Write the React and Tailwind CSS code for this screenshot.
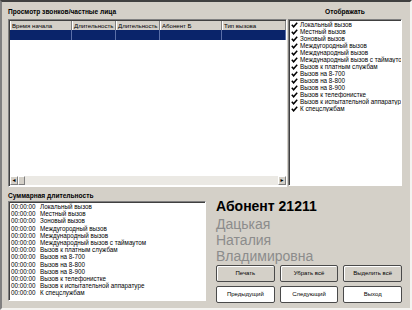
import React from "react";

const font = { fontFamily: '"Liberation Sans", Arial, sans-serif' };

const callTypes = [
  "Локальный вызов",
  "Местный вызов",
  "Зоновый вызов",
  "Междугородный вызов",
  "Международный вызов",
  "Международный вызов с таймаутом",
  "Вызов к платным службам",
  "Вызов на 8-700",
  "Вызов на 8-800",
  "Вызов на 8-900",
  "Вызов к телефонистке",
  "Вызов к испытательной аппаратуре",
  "К спецслужбам",
];

const columns = [
  { title: "Время начала", w: "w-[62px]" },
  { title: "Длительность", w: "w-[44px]" },
  { title: "Длительность", w: "w-[44px]" },
  { title: "Абонент Б", w: "w-[62px]" },
  { title: "Тип вызова", w: "flex-1" },
];

function Check() {
  return (
    <svg width="7" height="6" viewBox="0 0 7 6" className="shrink-0">
      <path d="M0.8 2.8 L2.6 4.8 L6.2 0.8" fill="none" stroke="#000" strokeWidth="1.5" />
    </svg>
  );
}

function Sunken({ className = "", children }) {
  return (
    <div
      className={`border border-t-[#808080] border-l-[#808080] border-r-white border-b-white shadow-[inset_1px_1px_0_#404040] bg-white ${className}`}
    >
      {children}
    </div>
  );
}

function Button({ label, white }) {
  return (
    <div
      className={`h-[17px] flex items-center justify-center border border-[#4a4a4a] rounded-[2px] text-[6px] text-black ${
        white ? "bg-white" : "bg-[#d4d0c8] shadow-[inset_1px_1px_0_#fff]"
      }`}
    >
      {label}
    </div>
  );
}

export default function App() {
  return (
    <div
      style={font}
      className="w-[412px] h-[310px] bg-[#d4d0c8] border-t-2 border-l-2 border-t-[#404040] border-l-[#808080] border-r-2 border-b-2 border-r-[#f4f3f0] border-b-[#f4f3f0] text-black overflow-hidden"
    >
      {/* top part */}
      <div className="flex pl-[6px] pt-[2px]">
        <div className="w-[279px] flex flex-col">
          <div className="h-[15px] flex items-center text-[6.6px] font-bold">Просмотр звонков/частные лица</div>
          <Sunken className="h-[168px] flex flex-col pt-[1px] pl-[1px]">
            <div className="flex h-[9px]">
              {columns.map((c, i) => (
                <div
                  key={i}
                  className={`${c.w} bg-[#d4d0c8] border-l border-l-white border-r border-r-[#808080] text-[6.1px] leading-[9px] pl-[1px] whitespace-nowrap overflow-hidden`}
                >
                  {c.title}
                </div>
              ))}
            </div>
            <div className="flex h-[10px] bg-[#0a246a]">
              {columns.map((c, i) => (
                <div key={i} className={`${c.w} border-r border-r-[#5a6fa8]`} />
              ))}
            </div>
            <div className="flex-1" />
            <div className="h-[9px] flex bg-[#ebe9e4] mb-[1px]">
              <div className="w-[8px] bg-[#d4d0c8] border border-t-white border-l-white border-r-[#808080] border-b-[#808080] flex items-center justify-center text-[5px]">
                ◄
              </div>
              <div className="w-[7px] bg-[#d4d0c8] border border-t-white border-l-white border-r-[#808080] border-b-[#808080]" />
              <div className="flex-1" />
              <div className="w-[8px] bg-[#d4d0c8] border border-t-white border-l-white border-r-[#808080] border-b-[#808080] flex items-center justify-center text-[5px]">
                ►
              </div>
            </div>
          </Sunken>
        </div>
        <div className="w-[114px] ml-[1px] flex flex-col">
          <div className="h-[15px] flex items-center justify-center text-[6.6px] font-bold">Отображать</div>
          <Sunken className="h-[167px] pt-[1px] pl-[2px]">
            {callTypes.map((t) => (
              <div key={t} className="h-[7px] flex items-center gap-[2px] text-[6.3px] leading-[7px] whitespace-nowrap overflow-hidden">
                <Check />
                <span>{t}</span>
              </div>
            ))}
          </Sunken>
        </div>
      </div>

      {/* bottom part */}
      <div className="flex pl-[6px] mt-[3px]">
        <div className="w-[198px] flex flex-col">
          <div className="h-[11px] flex items-center text-[6.6px] font-bold">Суммарная длительность</div>
          <Sunken className="h-[100px] pt-[1px] pl-[1px]">
            {callTypes.map((t) => (
              <div key={t} className="h-[7.2px] flex text-[6.3px] leading-[7.2px] whitespace-nowrap">
                <span className="w-[30px] pl-[1px]">00:00:00</span>
                <span>{t}</span>
              </div>
            ))}
          </Sunken>
        </div>
        <div className="ml-[10px] w-[186px] flex flex-col pt-[8px]">
          <div className="text-[14px] leading-[16px] font-bold mb-[2px]">Абонент 21211</div>
          <div className="text-[14px] leading-[16px] text-[#8c8c8c]">Дацькая</div>
          <div className="text-[14px] leading-[16px] text-[#8c8c8c]">Наталия</div>
          <div className="text-[14px] leading-[16px] text-[#8c8c8c]">Владимировна</div>
          <div className="grid grid-cols-3 gap-x-[5px] gap-y-[4px] mt-[1px]">
            <Button label="Печать" />
            <Button label="Убрать всё" />
            <Button label="Выделить всё" />
            <Button label="Предыдущий" white />
            <Button label="Следующий" white />
            <Button label="Выход" white />
          </div>
        </div>
      </div>
    </div>
  );
}
